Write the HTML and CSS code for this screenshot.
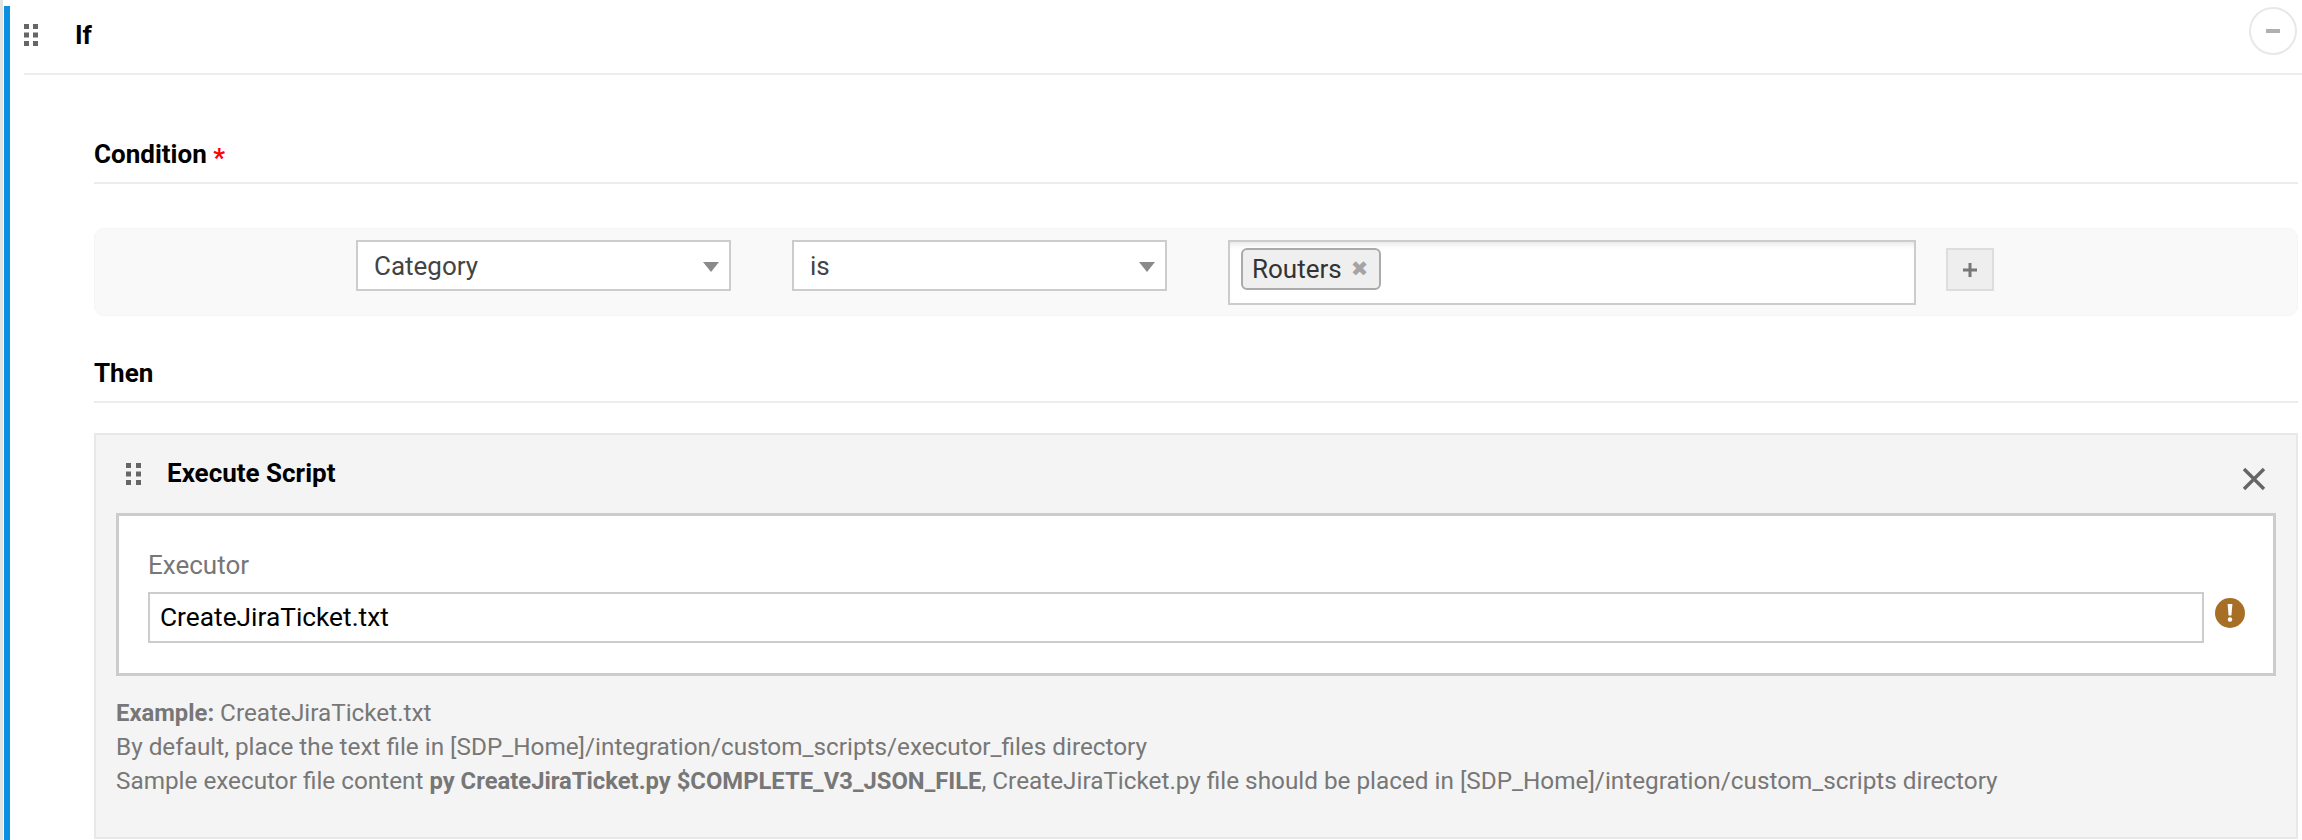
FILE: index.html
```html
<!DOCTYPE html>
<html lang="en">
<head>
  <meta charset="UTF-8">
  <title>If</title>
  <link rel="stylesheet" href="styles.css">
</head>
<body>
  <div class="rule">
    <div class="rule-head">
      <svg class="grip" width="14" height="22" viewBox="0 0 14 22"><path fill="#666" d="M0 0h5v5H0zM9 0h5v5H9zM0 8.500h5v5H0zM9 8.500h5v5H9zM0 17h5v5H0zM9 17h5v5H9z"/></svg>
      <span class="rule-title">If</span>
      <span class="collapse"><span class="collapse-bar"></span></span>
    </div>

    <div class="rule-body">
      <h3 class="section-title">Condition <span class="required">*</span></h3>

      <div class="condition">
        <div class="select field-select">Category<span class="caret"></span></div>
        <div class="select op-select">is<span class="caret"></span></div>
        <div class="tag-input">
          <span class="tag">Routers<span class="tag-x">&#10006;</span></span>
        </div>
        <div class="add-btn">
          <svg width="14" height="14" viewBox="0 0 14 14"><path fill="#777" d="M5.500 0h3v5.500H14v3H8.500V14h-3V8.500H0v-3h5.500z"/></svg>
        </div>
      </div>

      <h3 class="section-title then-title">Then</h3>

      <div class="action">
        <div class="action-head">
          <svg class="grip" width="15" height="22" viewBox="0 0 15 22"><path fill="#666" d="M0 0h5v5H0zM10 0h5v5h-5zM0 8.500h5v5H0zM10 8.500h5v5h-5zM0 17h5v5H0zM10 17h5v5h-5z"/></svg>
          <span class="action-title">Execute Script</span>
          <svg class="close" width="24" height="24" viewBox="0 0 24 24"><path stroke="#666" stroke-width="3.400" fill="none" d="M2 2l20 20M22 2L2 22"/></svg>
        </div>

        <div class="action-form">
          <label class="form-label">Executor</label>
          <div class="form-row">
            <div class="text-input">CreateJiraTicket.txt</div>
            <svg class="warn" width="30" height="30" viewBox="0 0 30 30"><circle cx="15" cy="15" r="15" fill="#a76f25"/><path fill="#fff" d="M12.600 6h4.800l-1 11.500h-2.800z"/><circle cx="15" cy="21.500" r="2.200" fill="#fff"/></svg>
          </div>
        </div>

        <div class="help">
          <div><b>Example:</b> CreateJiraTicket.txt</div>
          <div>By default, place the text file in [SDP_Home]/integration/custom_scripts/executor_files directory</div>
          <div>Sample executor file content <b>py CreateJiraTicket.py $COMPLETE_V3_JSON_FILE</b>, CreateJiraTicket.py file should be placed in [SDP_Home]/integration/custom_scripts directory</div>
        </div>
      </div>
    </div>
  </div>
</body>
</html>
```

FILE: styles.css
```css
html, body {
    height: 100%;
}
body {
    margin: 0;
    height: 840px;
    overflow: hidden;
    background: #fff;
    border-left: 3px solid #e3e3e3;
    box-sizing: border-box;
    font-family: Roboto, "Liberation Sans", sans-serif;
    font-size: 26px;
    color: #444;
}
.rule {
    margin: 6px 0 0 1px;
    height: 834px;
    border-left: 6px solid #0b8fe3;
}
.rule-head {
    display: flex;
    align-items: center;
    height: 67px;
    margin-left: 14px;
    border-bottom: 2px solid #ececec;
    position: relative;
}
.rule-head .grip {
    margin-top: -9px;
}
.rule-title {
    margin-left: 37px;
    margin-top: -10px;
    font-weight: 700;
    color: #000;
}
.collapse {
    position: absolute;
    right: 5px;
    top: 1px;
    width: 48px;
    height: 48px;
    box-sizing: border-box;
    border: 2px solid #e8e8e8;
    border-radius: 50%;
    display: flex;
    align-items: center;
    justify-content: center;
}
.collapse-bar {
    width: 14px;
    height: 4px;
    background: #b0b0b0;
}
.rule-body {
    margin: 0 4px 0 84px;
}
.section-title {
    margin: 0;
    height: 109px;
    box-sizing: border-box;
    padding-top: 63px;
    line-height: 32px;
    font-size: 26px;
    font-weight: 700;
    color: #000;
    border-bottom: 2px solid #ececec;
}
.required {
    color: #f00;
    font-size: 26px;
    vertical-align: -4px;
    line-height: 1;
}
.then-title {
    height: 87px;
    padding-top: 41px;
}
.condition {
    display: flex;
    align-items: flex-start;
    height: 88px;
    margin-top: 44px;
    padding-top: 11px;
    box-sizing: border-box;
    background: #f9f9f9;
    border: 1px solid #f4f4f4;
    border-radius: 10px;
}
.select {
    width: 375px;
    height: 51px;
    box-sizing: border-box;
    border: 2px solid #ccc;
    background: #fff;
    padding-left: 16px;
    line-height: 49px;
    position: relative;
}
.field-select {
    margin-left: 261px;
}
.op-select {
    margin-left: 61px;
}
.caret {
    position: absolute;
    right: 10px;
    top: 20px;
    border-left: 8px solid transparent;
    border-right: 8px solid transparent;
    border-top: 10px solid #8a8a8a;
}
.tag-input {
    width: 688px;
    height: 65px;
    margin-left: 61px;
    box-sizing: border-box;
    border: 2px solid #ccc;
    background: #fff;
    box-shadow: inset 0 6px 6px -4px #e4e4e4;
    padding: 6px 11px;
}
.tag {
    display: inline-flex;
    align-items: center;
    height: 42px;
    width: 140px;
    box-sizing: border-box;
    padding-left: 9px;
    border: 2px solid #aaa;
    border-radius: 6px;
    background: #efefef;
    color: #333;
}
.tag-x {
    margin-left: 9px;
    font-size: 21px;
    color: #a4a4a4;
    font-family: "DejaVu Sans", sans-serif;
}
.add-btn {
    width: 48px;
    height: 43px;
    margin: 8px 0 0 30px;
    box-sizing: border-box;
    border: 2px solid #ddd;
    background: #eee;
    display: flex;
    align-items: center;
    justify-content: center;
}
.action {
    margin-top: 30px;
    height: 406px;
    box-sizing: border-box;
    background: #f4f4f4;
    border: 2px solid #e8e8e8;
    padding: 0 20px;
}
.action-head {
    display: flex;
    align-items: center;
    height: 78px;
}
.action-head .grip {
    margin-left: 10px;
}
.action-title {
    margin-left: 26px;
    margin-top: -2px;
    font-weight: 700;
    color: #000;
}
.close {
    margin-left: auto;
    margin-right: 10px;
    margin-top: 10px;
}
.action-form {
    height: 163px;
    box-sizing: border-box;
    border: 3px solid #ccc;
    background: #fff;
    padding: 31px 0 0 29px;
}
.form-label {
    display: block;
    line-height: 36px;
    color: #777;
}
.form-row {
    display: flex;
    align-items: flex-start;
    margin-top: 9px;
}
.text-input {
    width: 2056px;
    height: 51px;
    box-sizing: border-box;
    border: 2px solid #ccc;
    padding-left: 10px;
    line-height: 47px;
    font-size: 26.300px;
    color: #000;
}
.warn {
    margin: 6px 0 0 11px;
}
.help {
    margin-top: 20px;
    font-size: 24.3px;
    line-height: 34px;
    color: #777;
}
.help b {
    font-size: 23.8px;
}
```
